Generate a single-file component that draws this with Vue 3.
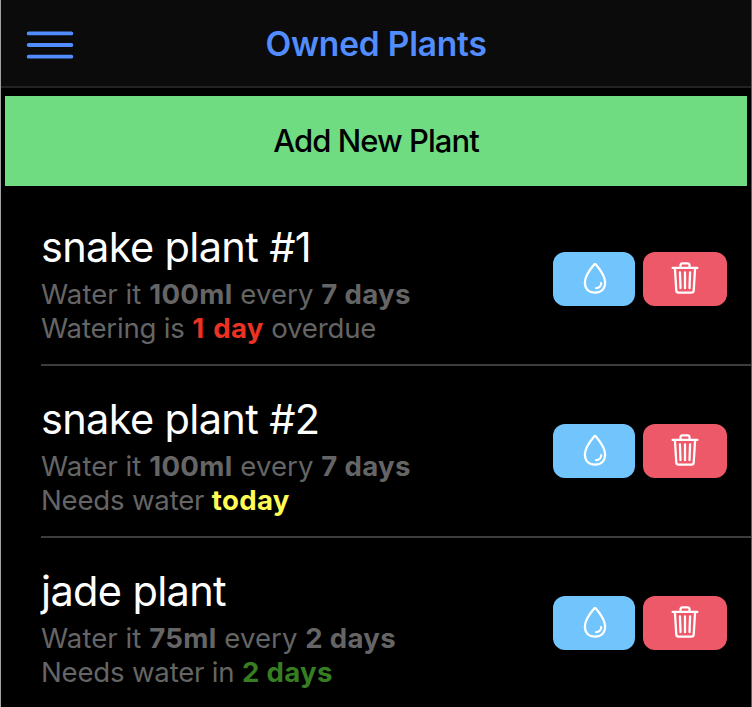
<script setup>
const plants = [
  { name: 'snake plant #1', amount: '100ml', every: '7 days', before: 'Watering is', due: '1 day', after: 'overdue', state: 'overdue' },
  { name: 'snake plant #2', amount: '100ml', every: '7 days', before: 'Needs water', due: 'today', after: '', state: 'today' },
  { name: 'jade plant', amount: '75ml', every: '2 days', before: 'Needs water in', due: '2 days', after: '', state: 'upcoming' },
]
</script>

<template>
  <div class="screen">
    <header class="toolbar">
      <button class="menu" aria-label="Menu">
        <svg viewBox="0 0 512 512"><path d="M80 160h352M80 256h352M80 352h352" /></svg>
      </button>
      <h1 class="title">Owned Plants</h1>
    </header>
    <button class="add">Add New Plant</button>
    <ul class="list">
      <li v-for="plant in plants" :key="plant.name" class="item">
        <div class="info">
          <h2 class="name">{{ plant.name }}</h2>
          <p class="line">Water it <b>{{ plant.amount }}</b> every <b>{{ plant.every }}</b></p>
          <p class="line status">{{ plant.before }} <b :class="plant.state">{{ plant.due }}</b> {{ plant.after }}</p>
        </div>
        <div class="actions">
          <button class="action water" aria-label="Water">
            <svg viewBox="0 0 512 512">
              <path d="M400 320c0 88.37-55.63 144-144 144s-144-55.63-144-144c0-94.83 103.23-222.85 134.89-259.88a12 12 0 0118.23 0C296.77 97.15 400 225.17 400 320z" />
              <path d="M344 328a72 72 0 01-72 72" />
            </svg>
          </button>
          <button class="action remove" aria-label="Delete">
            <svg viewBox="0 0 512 512">
              <path d="M112 112l20 320c.95 18.49 14.4 32 32 32h184c17.67 0 30.87-13.51 32-32l20-320M80 112h352" />
              <path d="M192 112V72a23.93 23.93 0 0124-24h80a23.93 23.93 0 0124 24v40M256 176v224M184 176l8 224M328 176l-8 224" />
            </svg>
          </button>
        </div>
      </li>
    </ul>
  </div>
</template>

<style>
body {
  margin: 0;
  background: #000;
}
</style>

<style scoped>
.screen {
  box-sizing: border-box;
  height: 707px;
  overflow: hidden;
  background: #000;
  border-left: 1px solid #a0a2a6;
  border-right: 1px solid #5c5c5c;
  font-family: Inter, "Liberation Sans", sans-serif;
  color: #fff;
}
button {
  border: 0;
  padding: 0;
  font: inherit;
}
svg {
  display: block;
  fill: none;
  stroke: currentColor;
  stroke-width: 32;
  stroke-linecap: round;
  stroke-linejoin: round;
}
.toolbar {
  box-sizing: border-box;
  height: 88px;
  display: grid;
  grid-template-columns: 98px 1fr 98px;
  align-items: center;
  border-bottom: 2px solid #222;
  background: #0b0b0b;
  color: #528dff;
}
.menu {
  margin: 4px 0 0 18px;
  width: 62px;
  background: none;
  color: inherit;
}
.title {
  margin: 1px 0 0;
  text-align: center;
  font-size: 33.5px;
  line-height: 40px;
  font-weight: 600;
  letter-spacing: -0.2px;
  white-space: nowrap;
}
.add {
  display: block;
  width: 742px;
  height: 90px;
  margin: 8px 4px;
  padding-bottom: 2px;
  background: #6fdc82;
  color: #000;
  font-size: 31px;
  font-weight: 500;
  letter-spacing: -0.95px;
}
.list {
  margin: 0;
  padding: 0 0 0 40px;
  list-style: none;
}
.item {
  box-sizing: border-box;
  height: 172px;
  display: flex;
  justify-content: space-between;
  padding: 28px 24px 0 0;
  border-bottom: 2px solid #3c3c3c;
}
.name {
  margin: 0 0 5px;
  font-size: 41.5px;
  line-height: 50px;
  font-weight: 400;
  letter-spacing: -0.65px;
}
.line {
  margin: 0;
  font-size: 27.6px;
  line-height: 34px;
  letter-spacing: 0.05px;
  color: #656565;
  white-space: nowrap;
}
.line b {
  font-weight: 700;
  letter-spacing: 0.3px;
}
.status {
  letter-spacing: -0.2px;
}
.line .overdue {
  color: #eb3223;
  word-spacing: 2px;
}
.line .today {
  color: #fffd54;
}
.line .upcoming {
  color: #377d22;
}
.actions {
  display: flex;
  gap: 8px;
  padding-top: 30px;
}
.action {
  box-sizing: border-box;
  width: 84px;
  height: 54px;
  padding: 8px 24px 10px;
  border-radius: 12px;
  color: #fff;
}
.action svg {
  width: 36px;
  height: 36px;
}
.water {
  width: 82px;
  padding-right: 22px;
  background: #71c4fc;
}
.remove {
  background: #ed5968;
}
</style>
